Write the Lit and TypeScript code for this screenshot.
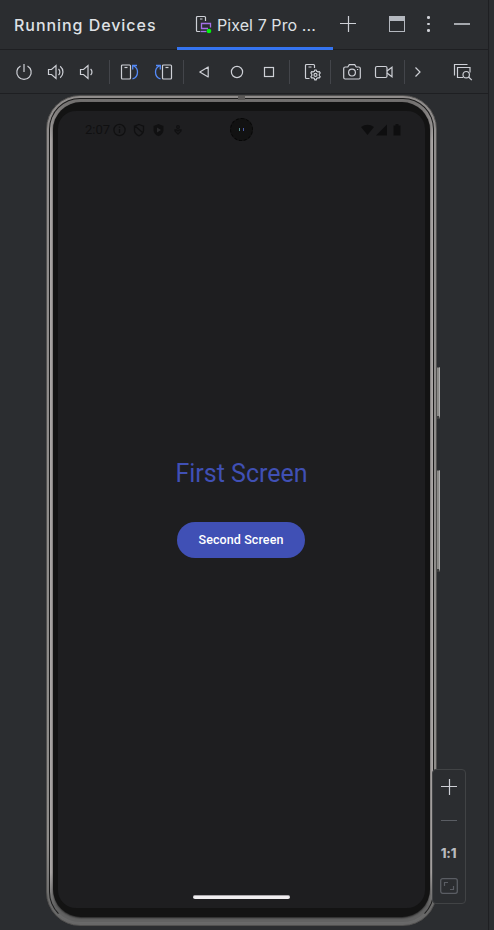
import { LitElement, html, css, svg } from "lit";
import { customElement } from "lit/decorators.js";

const icon = (w: number, h: number, body: unknown) => html`<svg
  width=${w} height=${h} viewBox="0 0 ${w} ${h}" fill="none" stroke="#ced0d6" stroke-width="1.2">${body}</svg>`;

const power = icon(18, 18, svg`<path d="M5.500 2.900A7.200 7.200 0 1 0 12.500 2.900M9 1v8"/>`);
const speaker = svg`<path d="M1.500 6.500h3l4.500-4v13l-4.500-4h-3z"/>`;
const volUp = icon(18, 18, svg`${speaker}<path d="M11.500 6a4 4 0 0 1 0 6M13.200 3.200a7.500 7.500 0 0 1 0 11.600"/>`);
const volDown = icon(18, 18, svg`${speaker}<path d="M11.600 6a4 4 0 0 1 0 6"/>`);
const rotL = icon(20, 18, svg`<rect x="1.500" y="2" width="9" height="14" rx="1"/><path d="M4.500 4.500h3"/><path stroke="#548af7" stroke-width="1.300" d="M12.500 15.800c3-.7 5-3.600 5-6.800 0-2.800-1.600-5-3.800-6M17 2.500h-4.300v4"/>`);
const rotR = icon(20, 18, svg`<rect x="9.500" y="2" width="9" height="14" rx="1"/><path d="M12.500 4.500h3"/><path stroke="#548af7" stroke-width="1.300" d="M7.500 15.800c-3-.7-5-3.600-5-6.800 0-2.800 1.600-5 3.800-6M3 2.500h4.300v4"/>`);
const back = icon(12, 14, svg`<path d="M10.200 2v10L1.800 7z" stroke-linejoin="round"/>`);
const home = icon(14, 14, svg`<circle cx="7" cy="7" r="5.600"/>`);
const overview = icon(12, 12, svg`<rect x="1.500" y="1.500" width="9" height="9"/>`);
const gear = svg`<path d="M11.300 8.300l.5-1.300h1.400l.5 1.300 1.300.6 1.400-.2.8 1.300-.9 1.200v1.300l.9 1.200-.8 1.200-1.400-.1-1.300.7-.5 1.300h-1.400l-.5-1.300-1.200-.7-1.500.1-.7-1.200.9-1.200v-1.300L7.900 10l.7-1.300 1.500.2z"/><circle cx="12.500" cy="11.900" r="1.500"/>`;
const settings = icon(18, 18, svg`<path d="M6.500 15.500h-3a1 1 0 0 1-1-1v-12a1 1 0 0 1 1-1h7a1 1 0 0 1 1 1V5M5.500 4h3"/>${gear}`);
const camera = icon(20, 18, svg`<path d="M1.700 5.500a1.500 1.500 0 0 1 1.500-1.500h2.600l1.500-2.300h5.400L14.200 4h2.600a1.500 1.500 0 0 1 1.500 1.500v9a1.500 1.500 0 0 1-1.500 1.500H3.200a1.500 1.500 0 0 1-1.500-1.500z"/><circle cx="10" cy="9.600" r="3.400"/><path d="M15 6.500h1.200"/>`);
const video = icon(20, 16, svg`<rect x="1.500" y="2.500" width="11.500" height="11" rx="1.500"/><path d="M13 7l5-3.800v9.600L13 9"/>`);
const more = icon(8, 12, svg`<path d="M1.500 1.500L6 6l-4.500 4.500"/>`);
const inspect = icon(20, 18, svg`<path d="M1.500 12.500v-11h13M10 14.500H4.500v-10H17v5"/><circle cx="13.200" cy="11.700" r="3.200"/><path d="M15.600 14l3.200 3.200"/>`);
const plus = icon(18, 18, svg`<path d="M9.500 1v16M1 8.500h16" stroke-width="1.200"/>`);
const deviceTab = icon(18, 20, svg`<path d="M6 16.500H3.500a1 1 0 0 1-1-1v-13a1 1 0 0 1 1-1h7a1 1 0 0 1 1 1V6M6 4h2.500"/><path d="M14 13.500H7.500v-5h9v4" stroke="#a571e6" stroke-width="1.300"/><path d="M6.500 16.500h6" stroke="#a571e6" stroke-width="1.300"/><circle cx="15" cy="16" r="2.300" fill="#00f50c" stroke="none"/>`);

@customElement("app-root")
export class AppRoot extends LitElement {
  static styles = css`
    :host { display: block; width: 494px; height: 930px; background: #2b2d30; overflow: hidden; color: #dfe1e5; font-family: Inter, sans-serif; }
    * { box-sizing: border-box; }
    svg { display: block; flex: none; }
    .window { display: flex; height: 930px; }
    .panel { width: 489px; border-right: 1px solid #1e1f22; display: flex; flex-direction: column; }
    .header { height: 50px; border-bottom: 1px solid #1e1f22; display: flex; flex: none; }
    .title { width: 163px; margin-left: 14px; line-height: 50px; font-size: 16px; font-weight: 550; letter-spacing: .95px; white-space: nowrap; }
    .tab { width: 156px; height: 50px; border-bottom: 3px solid #3574f0; display: flex; align-items: center; padding: 3px 0 0 17px; gap: 5px; font-size: 16px; letter-spacing: .08px; white-space: nowrap; }
    .tab svg { margin-top: -1px; }
    .actions { display: flex; align-items: center; height: 47px; padding-left: 6px; }
    .pane { width: 16px; height: 16px; border: 1px solid #b4b8bf; border-top-width: 5px; margin-left: 32px; }
    .dots { display: grid; gap: 4px; margin: 1px 0 0 22px; }
    .dots i { width: 2.500px; height: 2.500px; border-radius: 50%; background: #ced0d6; }
    .min { width: 16px; height: 1.500px; background: #a5a8ad; margin: 1px 0 0 24px; }
    .toolbar { height: 44px; border-bottom: 1px solid #1e1f22; flex: none; display: flex; align-items: center; padding-left: 15px; }
    .sep { width: 1px; height: 24px; background: #43454a; }
    .g9 { margin-left: 9px; } .g10 { margin-left: 10px; } .g11 { margin-left: 11px; } .g12 { margin-left: 12px; }
    .g13 { margin-left: 13px; } .g14 { margin-left: 14px; } .g20 { margin-left: 20px; } .g19 { margin-left: 19px; } .g31 { margin-left: 31px; }
    .stage { flex: 1; position: relative; overflow: hidden; }
    .phone { position: absolute; left: 46px; top: 1px; width: 391px; height: 831px; border-radius: 34px; background: linear-gradient(#8f8c8b, #8d8b89 90%, #686868 98%); border: 1px solid #51504f; padding: 2px; }
    .groove { height: 100%; border-radius: 31px; border: 1px solid #1b1b1b; border-bottom-color: #6a6a6a; background: linear-gradient(#706e6d, #aba7a6 5%, #aba7a6 94%, #626262 98%); padding: 3px 3px 5px; }
    .bezel { height: 100%; border-radius: 28px; background: #131313; padding: 9px 5px 7px; box-shadow: 0 1px 2px #222; }
    .screen { height: 797px; border-radius: 18px; background: #1e1e20; position: relative; display: flex; flex-direction: column; align-items: center; font-family: Roboto, sans-serif; }
    .status { display: flex; width: 100%; align-items: center; height: 36px; padding: 1px 24px 0 27px; color: #101011; font-size: 13px; }
    .fill { flex: 1; }
    .cam { position: absolute; left: 172px; top: 7px; width: 23px; height: 23px; border-radius: 50%; background: #121212; border: 1px dashed #070707; display: flex; align-items: center; justify-content: center; gap: 3px; }
    .cam i { width: 1px; height: 3px; background: #578c8a; } .cam i + i { background: #4a5ca8; }
    .heading { margin-top: 311px; line-height: 32px; font-size: 25px; color: #4050b5; white-space: nowrap; }
    .btn { margin: 32px 1px 0 0; width: 128px; height: 36px; border-radius: 18px; background: #4050b5; color: #fff; display: flex; align-items: center; justify-content: center; padding-bottom: 1px; font-size: 12.500px; font-weight: 500; letter-spacing: .1px; white-space: nowrap; }
    .nav { margin-top: auto; margin-bottom: 9px; width: 97px; height: 4px; border-radius: 2px; background: #f0eef0; border-top: 1px solid #aaa7ab; }
    .key { position: absolute; left: 436px; width: 4px; background: #8b8a87; border: 1px solid #595959; border-right-color: #aaa; border-bottom: 3px solid #3c3c3c; }
    .k1 { top: 273px; height: 52px; } .k2 { top: 376px; height: 102px; }
    .lug { position: absolute; left: 238px; top: 2px; width: 7px; height: 4px; background: #5b5958; }
    .zoom { position: absolute; left: 432px; top: 675px; width: 34px; height: 135px; border: 1px solid #414345; border-radius: 4px; background: #2b2d30; display: flex; flex-direction: column; align-items: center; padding: 8px 1px 0 0; }
    .minus { width: 16px; height: 1px; background: #5a5d63; margin-top: 24px; }
    .ratio { margin-top: 22px; font-size: 13px; line-height: 20px; font-weight: 800; color: #b8babf; letter-spacing: -.2px; }
    .fit { margin-top: 15px; }
  `;

  render() {
    return html`<div class="window"><div class="panel">
      <div class="header">
        <div class="title">Running Devices</div>
        <div class="tab">${deviceTab}<span>Pixel 7 Pro ...</span></div>
        <div class="actions">${plus}<div class="pane"></div><div class="dots"><i></i><i></i><i></i></div><div class="min"></div></div>
      </div>
      <div class="toolbar">
        <div>${power}</div><div class="g14">${volUp}</div><div class="g14">${volDown}</div>
        <div class="sep g12"></div>
        <div class="g10">${rotL}</div><div class="g13">${rotR}</div>
        <div class="sep g10"></div>
        <div class="g14">${back}</div><div class="g20">${home}</div><div class="g19">${overview}</div>
        <div class="sep g14"></div>
        <div class="g13">${settings}</div>
        <div class="sep g9"></div>
        <div class="g11">${camera}</div><div class="g12">${video}</div>
        <div class="sep g10"></div>
        <div class="g9">${more}</div><div class="g31">${inspect}</div>
      </div>
      <div class="stage">
        <div class="key k1"></div><div class="key k2"></div>
        <div class="phone"><div class="groove"><div class="bezel"><div class="screen">
          <div class="status"><span>2:07</span>
            <svg width="74" height="16" viewBox="0 0 74 16" fill="none" stroke="#101011" stroke-width="1.300">
              <circle cx="9.500" cy="8" r="5.600"/><path d="M9.500 7v4M9.500 4.500v1.300"/>
              <path d="M29 2.500l4.500 1.700v4c0 2.400-1.800 4.400-4.500 5.600-2.700-1.200-4.500-3.200-4.500-5.600v-4zM25 4l8 7"/>
              <path d="M48.500 2l5 2v4.200c0 2.600-2 4.800-5 6-3-1.200-5-3.400-5-6V4z" fill="#101011" stroke="none"/><path d="M47 5.500v5l4-2.500z" fill="#29292b" stroke="none"/>
              <circle cx="68" cy="5" r="1.300"/><path d="M65 8h2l1 1 1-1h2v1l-3 3-3-3z"/>
            </svg><span class="fill"></span>
            <svg width="40" height="14" viewBox="0 0 40 14" fill="#0e0e0f"><path d="M0 4q6.500-4.500 13 0L6.500 12z"/><path d="M15 12.500L26 1.500v11z"/><path d="M32.500 2.500h2v-1.500h3v1.500h2v10h-7z"/></svg>
          </div>
          <div class="cam"><i></i><i></i></div>
          <div class="heading">First Screen</div>
          <div class="btn">Second Screen</div>
          <div class="nav"></div>
        </div></div></div></div>
        <div class="lug"></div>
        <div class="zoom">${plus}<div class="minus"></div><div class="ratio">1:1</div>
          <svg class="fit" width="18" height="16" viewBox="0 0 18 16" fill="none" stroke="#5a5d63"><rect x=".7" y=".7" width="16.600" height="14.600" rx="2" stroke-width="1.300"/><path d="M4.500 8V4.500H8M10 11.500h3.500V8" stroke-width="1.200"/></svg>
        </div>
      </div>
    </div></div>`;
  }
}
